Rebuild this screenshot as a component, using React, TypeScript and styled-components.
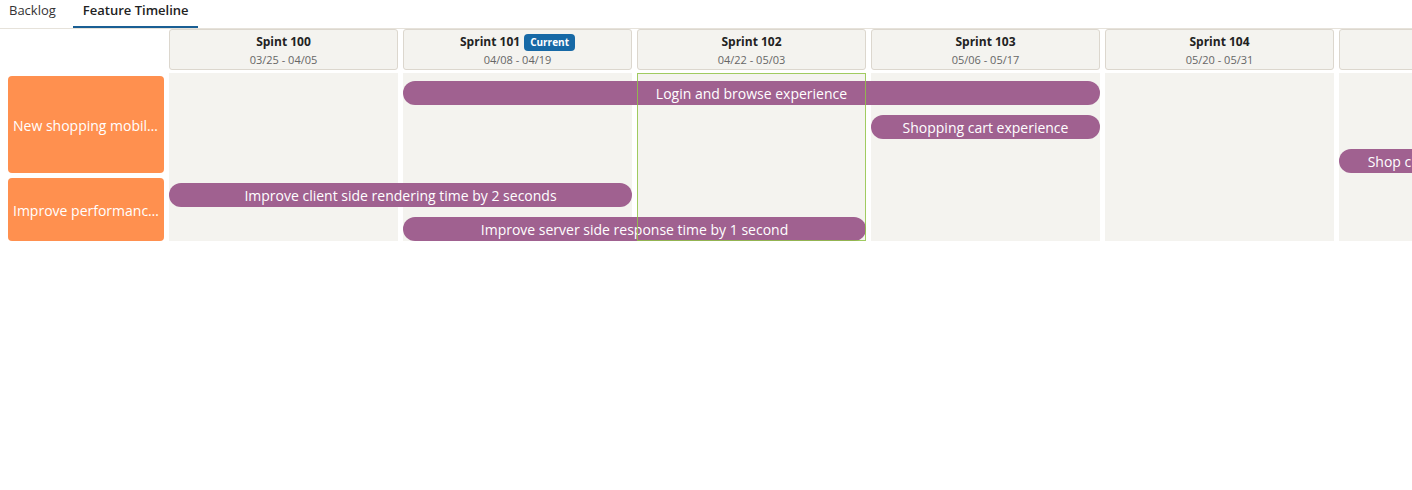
import React from "react";
import styled, { createGlobalStyle } from "styled-components";

const Global = createGlobalStyle`
  html, body { margin: 0; padding: 0; background: #fff; overflow: hidden; }
  body { font-family: "Open Sans", "Noto Sans", sans-serif; color: #222; }
  * { box-sizing: border-box; }
`;

const Page = styled.div`
  width: 1412px;
  height: 490px;
  overflow: hidden;
`;

const TabBar = styled.div`
  display: flex;
  height: 29px;
  border-bottom: 1px solid #e6e2da;
`;

const Tab = styled.div<{ $active?: boolean }>`
  display: flex;
  align-items: flex-start;
  padding: 1px 9px 0 10px;
  margin-left: ${(p) => (p.$active ? "8px" : "-1px")};
  font-size: 13px;
  line-height: 18px;
  font-weight: ${(p) => (p.$active ? 600 : 400)};
  color: ${(p) => (p.$active ? "#222" : "#333")};
  border-bottom: 2px solid ${(p) => (p.$active ? "#1a5f94" : "transparent")};
  height: 28px;
`;

const Board = styled.div`
  display: grid;
  grid-template-columns: 164px repeat(6, 229px);
  column-gap: 5px;
  width: max-content;
`;

const Header = styled.div`
  display: contents;
`;

const Corner = styled.div``;

const SprintCell = styled.div`
  height: 41px;
  margin-bottom: 3px;
  background: #f4f3ef;
  border: 1px solid #dcd7ce;
  border-radius: 3px;
  display: flex;
  flex-direction: column;
  align-items: center;
  padding-top: 3px;
`;

const SprintTitle = styled.div`
  display: flex;
  align-items: center;
  gap: 4px;
  font-size: 12px;
  font-weight: 700;
  line-height: 18px;
  color: #222;
`;

const Badge = styled.span`
  background: #1769a6;
  color: #fff;
  font-size: 10px;
  font-weight: 700;
  line-height: 17px;
  padding: 0 6px;
  border-radius: 4px;
`;

const SprintDates = styled.div`
  font-size: 11px;
  line-height: 16px;
  margin-top: 1px;
  color: #666;
`;

const Body = styled.div`
  grid-column: 1 / -1;
  display: grid;
  grid-template-columns: 164px repeat(6, 229px);
  grid-template-rows: repeat(4, 34px) 32px;
  column-gap: 5px;
  height: 168px;
  overflow: hidden;
  position: relative;
`;

const ColumnBg = styled.div<{ $col: number }>`
  grid-column: ${(p) => p.$col};
  grid-row: 1 / -1;
  background: #f4f3ef;
`;

const Highlight = styled.div<{ $col: number }>`
  grid-column: ${(p) => p.$col};
  grid-row: 1 / -1;
  border: 1px solid rgba(145, 195, 70, 0.85);
  z-index: 2;
  pointer-events: none;
`;

const RowLabel = styled.div<{ $rows: string; $mb: number }>`
  grid-column: 1;
  grid-row: ${(p) => p.$rows};
  margin: 3px 0 ${(p) => p.$mb}px 8px;
  background: #ff904f;
  border-radius: 4px;
  color: #fff;
  font-size: 14px;
  display: flex;
  align-items: center;
  padding: 1px 5px 0 5px;
  overflow: hidden;
`;

const LabelText = styled.span`
  white-space: nowrap;
  overflow: hidden;
  text-overflow: ellipsis;
`;

const Bar = styled.div<{ $cols: string; $row: number }>`
  grid-column: ${(p) => p.$cols};
  grid-row: ${(p) => p.$row};
  margin-top: 8px;
  height: 24px;
  border-radius: 12px;
  background: #a06190;
  color: #fff;
  font-size: 14px;
  line-height: 25px;
  text-align: center;
  white-space: nowrap;
  overflow: hidden;
  z-index: 1;
`;

const sprints = [
  { name: "Spint 100", dates: "03/25 - 04/05" },
  { name: "Sprint 101", dates: "04/08 - 04/19", current: true },
  { name: "Sprint 102", dates: "04/22 - 05/03" },
  { name: "Sprint 103", dates: "05/06 - 05/17" },
  { name: "Sprint 104", dates: "05/20 - 05/31" },
  { name: "Sprint 105", dates: "06/03 - 06/14" },
];

const bars = [
  { text: "Login and browse experience", cols: "3 / 6", row: 1 },
  { text: "Shopping cart experience", cols: "5 / 6", row: 2 },
  { text: "Shop checkout experience", cols: "7 / 8", row: 3 },
  { text: "Improve client side rendering time by 2 seconds", cols: "2 / 4", row: 4 },
  { text: "Improve server side response time by 1 second", cols: "3 / 5", row: 5 },
];

export default function App() {
  return (
    <Page>
      <Global />
      <TabBar>
        <Tab>Backlog</Tab>
        <Tab $active>Feature Timeline</Tab>
      </TabBar>
      <Board>
        <Header>
          <Corner />
          {sprints.map((s) => (
            <SprintCell key={s.name}>
              <SprintTitle>
                {s.name}
                {s.current && <Badge>Current</Badge>}
              </SprintTitle>
              <SprintDates>{s.dates}</SprintDates>
            </SprintCell>
          ))}
        </Header>
        <Body>
          {sprints.map((s, i) => (
            <ColumnBg key={s.name} $col={i + 2} />
          ))}
          <Highlight $col={4} />
          <RowLabel $rows="1 / 4" $mb={2}>
            <LabelText>New shopping mobile app experience</LabelText>
          </RowLabel>
          <RowLabel $rows="4 / 6" $mb={0}>
            <LabelText>Improve performance of the site</LabelText>
          </RowLabel>
          {bars.map((b) => (
            <Bar key={b.text} $cols={b.cols} $row={b.row}>
              {b.text}
            </Bar>
          ))}
        </Body>
      </Board>
    </Page>
  );
}
